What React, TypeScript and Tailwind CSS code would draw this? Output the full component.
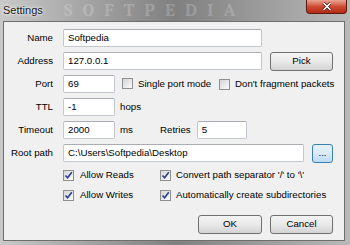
import React from "react"

const font = { fontFamily: '"Liberation Sans", Arial, sans-serif' }

function Field({ className, value }: { className: string; value?: string }) {
  return (
    <div
      className={`flex h-[18px] items-center rounded-[2px] border border-[#c3c7cf] border-t-[#abadb3] bg-white px-[4px] text-black ${className}`}
    >
      {value}
    </div>
  )
}

function Button({ label, className = "", focused = false }: { label: string; className?: string; focused?: boolean }) {
  return (
    <div
      className={
        focused
          ? `flex h-[19px] items-center justify-center rounded-[3px] border border-[#3c7fb1] bg-gradient-to-b from-[#e5f1fb] via-[#d9ebf9] to-[#bcd9f0] text-black ${className}`
          : `flex h-[19px] items-center justify-center rounded-[3px] border border-[#707070] bg-gradient-to-b from-[#f4f4f4] via-[#e9e9e9] to-[#d3d3d3] text-black ${className}`
      }
    >
      {label}
    </div>
  )
}

function Check({ checked = false }: { checked?: boolean }) {
  return (
    <div className="flex h-[11px] w-[11px] shrink-0 items-center justify-center border border-[#8e8f8f] bg-white">
      <div className="relative h-[9px] w-[9px] bg-gradient-to-br from-[#d6d6d6] to-[#fafafa]">
        {checked && (
          <svg width="9" height="9" viewBox="0 0 9 9" className="absolute left-0 top-0">
            <path d="M1.5 4.5 L3.6 6.8 L7.8 1.2" fill="none" stroke="#2a3f8f" strokeWidth="1.6" />
          </svg>
        )}
      </div>
    </div>
  )
}

function Label({ text }: { text: string }) {
  return <div className="w-[49px] shrink-0 text-right">{text}</div>
}

export default function App() {
  return (
    <div
      className="relative flex h-[245px] w-[350px] flex-col overflow-hidden bg-gradient-to-r from-[#c9c9c9] via-[#808080] to-[#b9b9b9]"
      style={font}
    >
      {/* title bar */}
      <div className="relative flex h-[21px] shrink-0 items-center pl-[3px]">
        <span className="pointer-events-none absolute left-[64px] top-[1px] select-none font-serif text-[18px] font-bold leading-[20px] tracking-[10px] text-white/20">
          SOFTPEDIA
        </span>
        <span className="relative text-[11px] text-[#151515] [text-shadow:0_0_4px_#ffffff,0_0_2px_#ffffff]">Settings</span>
        <div className="absolute right-[3px] top-0 flex h-[14px] w-[41px] items-center justify-center rounded-b-[4px] border border-t-0 border-[#5a1a10] bg-gradient-to-b from-[#e8a593] via-[#cf4a33] to-[#b52a14]">
          <svg width="10" height="9" viewBox="0 0 10 9">
            <path d="M1.5 1 L8.5 8 M8.5 1 L1.5 8" stroke="#4a1208" strokeWidth="3" />
            <path d="M1.5 1 L8.5 8 M8.5 1 L1.5 8" stroke="#ffffff" strokeWidth="1.7" />
          </svg>
        </div>
      </div>

      {/* client area */}
      <div className="mb-[4px] ml-[3px] mr-[5px] flex flex-1 flex-col border border-[#6e6e6e] bg-[#f0f0f0] pt-[7px] text-[9.7px] text-black">
        <div className="flex h-[18px] items-center">
          <Label text="Name" />
          <Field className="ml-[10px] w-[199px]" value="Softpedia" />
        </div>

        <div className="mt-[5px] flex h-[18px] items-center">
          <Label text="Address" />
          <Field className="ml-[10px] w-[199px] text-[#1a1a3a]" value="127.0.0.1" />
          <Button label="Pick" className="ml-[8px] w-[63px]" />
        </div>

        <div className="mt-[5px] flex h-[18px] items-center">
          <Label text="Port" />
          <Field className="ml-[10px] w-[52px]" value="69" />
          <div className="ml-[7px] flex w-[97px] items-center">
            <Check />
            <span className="ml-[5px]">Single port mode</span>
          </div>
          <Check />
          <span className="ml-[5px]">Don&apos;t fragment packets</span>
        </div>

        <div className="mt-[5px] flex h-[18px] items-center">
          <Label text="TTL" />
          <Field className="ml-[10px] w-[52px]" value="-1" />
          <span className="ml-[5px]">hops</span>
        </div>

        <div className="mt-[5px] flex h-[18px] items-center">
          <Label text="Timeout" />
          <Field className="ml-[10px] w-[52px]" value="2000" />
          <span className="ml-[5px] w-[40px]">ms</span>
          <span>Retries</span>
          <Field className="ml-[6px] w-[50px]" value="5" />
        </div>

        <div className="mt-[5px] flex h-[18px] items-center">
          <Label text="Root path" />
          <Field className="ml-[10px] w-[241px]" value="C:\Users\Softpedia\Desktop" />
          <Button label="..." className="ml-[8px] w-[21px]" focused />
        </div>

        <div className="relative mt-[6px] flex h-[14px] items-center pl-[59px]">
          <div className="flex w-[97px] items-center">
            <Check checked />
            <span className="ml-[6px]">Allow Reads</span>
          </div>
          <Check checked />
          <span className="ml-[5px]">Convert path separator &apos;/&apos; to &apos;\&apos;</span>
        </div>

        <div className="mt-[6px] flex h-[14px] items-center pl-[59px]">
          <div className="flex w-[97px] items-center">
            <Check checked />
            <span className="ml-[6px]">Allow Writes</span>
          </div>
          <Check checked />
          <span className="ml-[5px]">Automatically create subdirectories</span>
        </div>

        <div className="mt-[13px] flex items-center justify-end pr-[11px]">
          <Button label="OK" className="w-[64px]" />
          <Button label="Cancel" className="ml-[8px] w-[63px]" />
        </div>
      </div>
    </div>
  )
}
